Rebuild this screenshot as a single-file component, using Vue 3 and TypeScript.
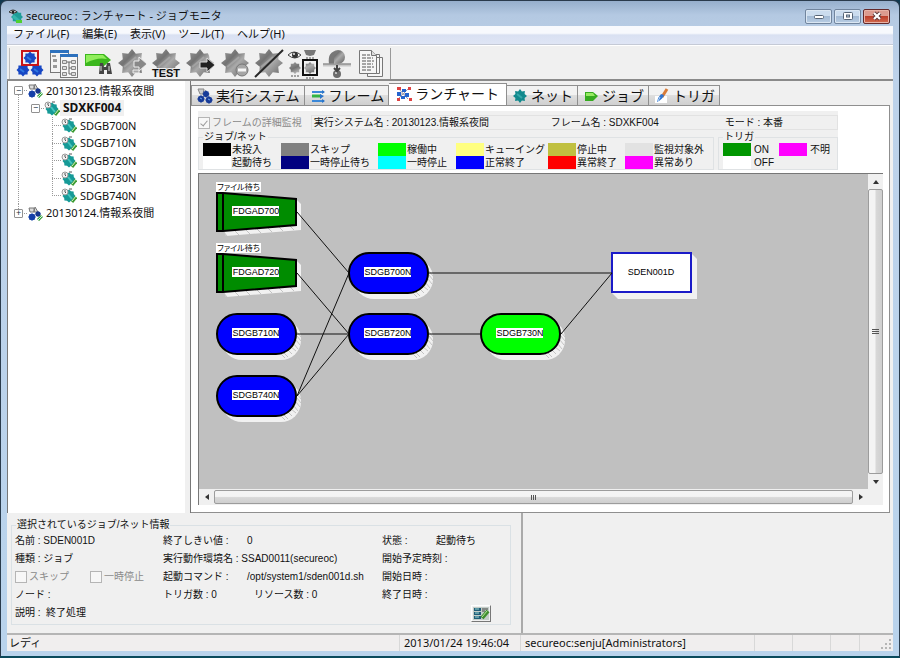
<script setup lang="ts">
import { ref } from 'vue'

interface Swatch { label: string; color: string }
interface TreeRow { label: string; level: number; mark?: string; last?: boolean }
interface JobNode { name: string; x: number; y: number; kind: 'file' | 'net' | 'job'; fill: string }

const menus = ['ファイル(F)', '編集(E)', '表示(V)', 'ツール(T)', 'ヘルプ(H)']
const tools = [
  'システム', '一覧', 'ジョブ検索', '再起動', 'テスト', '起動', '停止', '切断', '監視', '切替', 'ログ',
]

const tree: TreeRow[] = [
  { label: '20130123.情報系夜間', level: 0, mark: '−' },
  { label: 'SDXKF004', level: 1, mark: '−' },
  { label: 'SDGB700N', level: 2 },
  { label: 'SDGB710N', level: 2 },
  { label: 'SDGB720N', level: 2 },
  { label: 'SDGB730N', level: 2 },
  { label: 'SDGB740N', level: 2, last: true },
  { label: '20130124.情報系夜間', level: 0, mark: '+', last: true },
]

const tabs = ['実行システム', 'フレーム', 'ランチャート', 'ネット', 'ジョブ', 'トリガ']
const active = ref(2)

const states: Swatch[] = [
  { label: '未投入', color: '#000000' },
  { label: 'スキップ', color: '#808080' },
  { label: '稼働中', color: '#00ff00' },
  { label: 'キューイング', color: '#ffff80' },
  { label: '停止中', color: '#c0c040' },
  { label: '監視対象外', color: '#e2e2e2' },
  { label: '起動待ち', color: '#ffffff' },
  { label: '一時停止待ち', color: '#000080' },
  { label: '一時停止', color: '#00ffff' },
  { label: '正常終了', color: '#0000ff' },
  { label: '異常終了', color: '#ff0000' },
  { label: '異常あり', color: '#ff00ff' },
]
const triggers: Swatch[] = [
  { label: 'ON', color: '#009600' },
  { label: '不明', color: '#ff00ff' },
  { label: 'OFF', color: '#ffffff' },
]

const nodes: JobNode[] = [
  { name: 'FDGAD700', x: 18, y: 18, kind: 'file', fill: '#008c00' },
  { name: 'FDGAD720', x: 18, y: 79, kind: 'file', fill: '#008c00' },
  { name: 'SDGB710N', x: 18, y: 140, kind: 'net', fill: '#0000ff' },
  { name: 'SDGB740N', x: 18, y: 202, kind: 'net', fill: '#0000ff' },
  { name: 'SDGB700N', x: 150, y: 79, kind: 'net', fill: '#0000ff' },
  { name: 'SDGB720N', x: 150, y: 140, kind: 'net', fill: '#0000ff' },
  { name: 'SDGB730N', x: 282, y: 140, kind: 'net', fill: '#00ff00' },
  { name: 'SDEN001D', x: 413, y: 79, kind: 'job', fill: '#ffffff' },
]
const edges: [number, number][] = [[0, 4], [1, 5], [2, 5], [3, 4], [3, 5], [4, 7], [5, 6], [6, 7]]

/** Closed star outline used for every gear glyph. */
function gear(cx: number, cy: number, outer: number, inner: number, teeth = 8): string {
  const pts: string[] = []
  for (let i = 0; i < teeth * 2; i++) {
    const r = i % 2 ? inner : outer
    const a = (Math.PI * i) / teeth - Math.PI / 2
    pts.push(`${(cx + r * Math.cos(a)).toFixed(1)} ${(cy + r * Math.sin(a)).toFixed(1)}`)
  }
  return `M${pts.join('L')}Z`
}
</script>

<template>
  <div class="window">
    <header class="titlebar">
      <svg class="app-icon" width="14" height="14" viewBox="0 0 14 14">
        <path :d="gear(8, 8, 6, 4.5)" fill="#1f9d98" />
        <path d="M4 7l7 6" stroke="#35b5ac" stroke-width="3" />
        <path d="M0 3q4-4 8 0q-4 3-8 0z" fill="#eee" stroke="#333" /><circle cx="4" cy="3" r="1.4" fill="#222" />
        <path d="M7 11h6v3H7z" fill="#4fd02f" />
      </svg>
      <h1>secureoc : ランチャート - ジョブモニタ</h1>
      <div class="caption-buttons">
        <button type="button" aria-label="最小化">
          <svg width="12" height="10" viewBox="0 0 12 10"><rect x="1.5" y="4.5" width="9" height="3" rx="1" fill="#fff" stroke="#566475" /></svg>
        </button>
        <button type="button" aria-label="最大化">
          <svg width="12" height="10" viewBox="0 0 12 10"><rect x="1.5" y="1.5" width="9" height="7" rx="1" fill="#fff" stroke="#566475" /><rect x="4.5" y="4" width="3" height="2" fill="#b8cbe0" stroke="#566475" /></svg>
        </button>
        <button type="button" class="close" aria-label="閉じる">
          <svg width="12" height="10" viewBox="0 0 12 10"><path d="M3 2l6 6M9 2L3 8" stroke="#5b3838" stroke-width="4" /><path d="M3 2l6 6M9 2L3 8" stroke="#fff" stroke-width="2.2" /></svg>
        </button>
      </div>
    </header>

    <div class="client">
      <nav class="menubar"><button v-for="m in menus" :key="m" type="button">{{ m }}</button></nav>

      <div class="toolbar">
        <div class="tools">
          <button v-for="(t, i) in tools" :key="t" type="button" :aria-label="t">
            <svg width="32" height="30" viewBox="0 0 32 30">
              <defs>
                <linearGradient :id="`metal${i}`" x1="0" y1="0" x2="1" y2="1">
                  <stop offset="0" stop-color="#a2a2a2" /><stop offset=".35" stop-color="#727272" />
                  <stop offset=".55" stop-color="#aaa" /><stop offset="1" stop-color="#5e5e5e" />
                </linearGradient>
              </defs>
              <template v-if="i === 0">
                <path :d="gear(16, 9, 6.5, 5) + gear(9, 21, 6.5, 5) + gear(23, 21, 6.5, 5)" fill="#1747c4" />
                <path d="M13 8l4 3M6 20l4 3M20 20l4 3" stroke="#3078e0" stroke-width="2" />
                <rect x="8" y="2" width="16" height="14" fill="none" stroke="#c81418" stroke-width="2" />
              </template>
              <template v-else-if="i === 1">
                <g stroke="#777"><rect x="2.5" y="1.5" width="18" height="22" fill="#f4f4f4" /><rect x="12.5" y="5.5" width="17" height="23" fill="#f6f6f6" /></g>
                <path d="M2 1h19v3H2zM12 5h18v3H12z" fill="#2d71bd" />
                <path d="M4 6h4v2H4zM5 10h4v3H5zM5 16h4v3H5z" fill="#999" />
                <path d="M14.500 11.500h4v3h-4zM14.500 17.500h4v3h-4zM14.500 23.500h4v3h-4zM23.500 11.500h4v3h-4zM23.500 17.500h4v3h-4zM23.500 23.500h4v3h-4z" fill="#ddd" stroke="#888" />
                <path d="M21 13v12M19 13h4M21 19h2M21 25h2" stroke="#666" fill="none" />
              </template>
              <template v-else-if="i === 2">
                <path d="M3 5h19l7 6-7 6H3z" fill="#3bb71d" /><path d="M4 6h17l4 4q-10-2-21 4z" fill="#91ee5c" />
                <path d="M18 14h3l1 4h2l1-4h3l2 11h-5v-4h-3v4h-5z" fill="#454545" /><path d="M19 17v5M27 17v5" stroke="#ddd" />
              </template>
              <template v-else-if="i === 8">
                <path :d="gear(8, 19, 6, 4.5) + gear(23, 19, 6, 4.5)" :fill="`url(#metal${i})`" />
                <path d="M1 6q6-6 13 0q-6 6-13 0z" fill="#f6f6f6" stroke="#444" /><circle cx="8" cy="6" r="3" fill="#333" /><circle cx="7" cy="5" r="1" fill="#eee" />
                <path d="M17 1h12l-2 5-4 1-4-1z" fill="#777" /><path d="M19 9h8M4 27h8M19 29h8" stroke="#555" stroke-dasharray="2 1" />
                <rect x="16" y="11" width="14" height="15" fill="none" stroke="#111" stroke-width="2" />
              </template>
              <template v-else-if="i === 9">
                <circle cx="17" cy="8" r="7" :fill="`url(#metal${i})`" /><path d="M8 15q-2-13 9-13q-5 3-4 13z" fill="#777" />
                <path d="M2 16h28" stroke="#c8c8c8" stroke-width="3" /><path d="M2 15h28" stroke="#777" />
                <circle cx="16" cy="25" r="4" fill="#6b6b6b" /><circle cx="15" cy="24" r="1" fill="#ddd" /><path d="M16 16v5m-3-2l3 3 3-3" stroke="#444" stroke-width="2" fill="none" />
              </template>
              <template v-else-if="i === 10">
                <g fill="#f6f6f6" stroke="#777"><path d="M12.500 8.500h15v19h-15zM9.500 5.500h15v19h-15z" /><path d="M4.500 1.500h12l5 5v18h-17z" /><path d="M16.500 1.500v5h5" fill="#ddd" /></g>
                <path d="M7 6h8M7 9h11M7 12h12M7 15h11M7 18h12M7 21h9" stroke="#555" stroke-dasharray="4 1" />
              </template>
              <template v-else>
                <path :d="gear(16, 14, 14, 10)" :fill="`url(#metal${i})`" />
                <path d="M8 18l12-10" stroke="#c5c5c5" stroke-width="2" opacity=".4" />
                <g v-if="i === 3"><path d="M18 12h5V8l8 7-8 7v-4h-5z" fill="#888" stroke="#eee" /><path d="M17 21h6v3h-6z" fill="#aaa" stroke="#eee" /></g>
                <text v-if="i === 4" class="test" x="16" y="28">TEST</text>
                <g v-if="i === 5"><path d="M22 0h10v9h-6z" fill="#f0f0f0" /><path d="M16 13h7V9l8 7-8 7v-4h-7z" fill="#222" stroke="#ddd" /></g>
                <g v-if="i === 6"><circle cx="23" cy="21" r="6" fill="#a6a6a6" stroke="#777" /><path d="M19 21h8" stroke="#f6f6f6" stroke-width="3" /></g>
                <path v-if="i === 7" d="M2 28L30 1" stroke="#292929" stroke-width="2" />
              </template>
            </svg>
          </button>
        </div>
      </div>

      <main class="workspace">
        <aside class="tree" role="tree">
          <div v-for="(row, i) in tree" :key="row.label" class="tree-row" role="treeitem">
            <span v-if="row.level > 0" class="cell line" />
            <span v-if="row.level === 2" class="cell" />
            <span
              class="cell across"
              :class="{ line: row.level === 2 && !row.last, down: i === 0, up: row.last }"
            ><button v-if="row.mark" type="button" class="toggle" :aria-label="`${row.label} の開閉`">{{ row.mark }}</button></span>
            <svg class="tree-icon" width="16" height="15" viewBox="0 0 16 15">
              <template v-if="row.level === 0">
                <path d="M2 2h5v4H3zM8 1l3 5H7z" fill="#ddd" stroke="#777" />
                <path :d="gear(5, 11, 3.8, 3.2)" fill="#143fa8" /><path :d="gear(11, 8, 3, 2.5)" fill="#17378d" />
                <path d="M11 14l4-4" stroke="#3f9d3b" stroke-width="3" /><path d="M11 14l4-4" stroke="#cfe" />
              </template>
              <template v-else>
                <path :d="gear(8, 8, 6.5, 5.2)" fill="#169a97" /><path d="M7 6l4 5" stroke="#46c4be" stroke-width="2" />
                <circle cx="4" cy="4" r="3" fill="#f2f2f2" stroke="#999" /><path d="M4 2v2l1 1M8 1h3" stroke="#555" fill="none" />
                <path d="M11 14l4-5" stroke="#3d9b32" stroke-width="3" /><path d="M11 13l4-5" stroke="#d5f5cc" />
              </template>
            </svg>
            <span class="tree-label" :class="{ current: row.level === 1 }">{{ row.label }}</span>
          </div>
        </aside>

        <section class="detail">
          <div class="tabs" role="tablist">
            <button
              v-for="(t, i) in tabs" :key="t" type="button" role="tab"
              :class="{ active: active === i }" :aria-selected="active === i" @click="active = i"
            >
              <svg width="18" height="16" viewBox="0 0 18 16">
                <g v-if="i === 0"><path d="M2 1h6l-1 5H4zM9 2l2 4" fill="#ccc" stroke="#888" /><path :d="gear(5, 11, 3.7, 3.2) + gear(13, 12, 3.7, 3.2) + gear(10, 6, 3.5, 3)" fill="#173b98" /><path d="M4 10l2 1M12 11l2 1" stroke="#6aa3ef" /></g>
                <g v-else-if="i === 1"><path d="M3 4h12M3 13h12" stroke="#3b88d8" stroke-width="2" /><path d="M3 8h9" stroke="#33b443" stroke-width="3" /><path d="M13 2l3 2-3 2zM11 6l4 2-4 3zM13 11l3 2-3 2z" fill="#2b75c9" /></g>
                <g v-else-if="i === 2"><path d="M4 3l9 10M4 12l9-9M3 8h10" stroke="#99a" /><path d="M2 1h4v3H2zM13 1h3v3h-3zM2 12h3v3H2zM14 12h3v3h-3z" fill="#df4343" /><path d="M2 6h4v4H2zM7 3h4v3H7zM10 7h4v4h-4zM6 10h4v3H6z" fill="#2464cf" /></g>
                <g v-else-if="i === 3"><path :d="gear(9, 8, 7, 5)" fill="#12898d" /><path d="M6 6l5 4" stroke="#36a9aa" stroke-width="2" /></g>
                <g v-else-if="i === 4"><path d="M3 4h8l5 4-5 5H3z" fill="#36ab20" /><path d="M4 5h7l2 3H4z" fill="#96ea63" /></g>
                <g v-else><path d="M2 8h12v7H2z" fill="#fff" /><path d="M14 1L9 9" stroke="#d87b38" stroke-width="3" /><path d="M11 7q-1 4-7 7q1-5 4-8z" fill="#2f75d0" /><path d="M7 9l-2 4" stroke="#c5e1ff" /></g>
              </svg>
              {{ t }}
            </button>
          </div>

          <div class="tab-page">
            <div class="summary">
              <div class="headline">
                <label class="check"><input type="checkbox" checked disabled>フレームの詳細監視</label>
                <div class="facts"><span>実行システム名 : 20130123.情報系夜間</span><span>フレーム名 : SDXKF004</span><span>モード : 本番</span></div>
              </div>
              <div class="keys">
                <fieldset class="key-group states">
                  <legend>ジョブ/ネット</legend>
                  <div class="swatches"><span v-for="s in states" :key="s.label" class="swatch"><i :style="{ background: s.color }" />{{ s.label }}</span></div>
                </fieldset>
                <fieldset class="key-group triggers">
                  <legend>トリガ</legend>
                  <div class="swatches"><span v-for="s in triggers" :key="s.label" class="swatch"><i :style="{ background: s.color }" />{{ s.label }}</span></div>
                </fieldset>
              </div>
            </div>

            <div class="chart">
              <svg id="chart" class="canvas" role="img" aria-label="ランチャート">
                <g v-for="n in nodes" :key="n.name" :transform="`translate(${n.x} ${n.y})`">
                  <template v-if="n.kind === 'file'">
                    <path class="shade" d="M5 34L9 44L84 38V12L79 7V34Z" />
                    <path class="facet" d="M6 39l4 5M17 38l5 5M28 37l5 5M39 36l5 5M50 35l5 5M61 34l5 5M72 33l5 5" />
                    <path class="outline" :fill="n.fill" d="M0 1H6L79 7V33L6 39H0Z" /><path class="outline" d="M6 1V39" />
                    <rect class="tag" x="-1" y="-10" width="45" height="10" /><text class="caption" x="0" y="-2">ファイル待ち</text>
                  </template>
                  <template v-else-if="n.kind === 'net'">
                    <rect class="shade" x="5" y="5" width="79" height="41" rx="20" />
                    <path class="facet" d="M80 18l4 5M80 22l4 5M79 26l4 5M77 30l4 5M74 33l5 4M71 36l4 4M67 39l4 4M64 40l4 4" />
                    <rect class="outline" :fill="n.fill" x="0" y="0" width="79" height="40" rx="20" />
                  </template>
                  <template v-else>
                    <path class="shade" d="M0 40L6 46H85V6L80 1Z" />
                    <rect x="0" y="0" width="79" height="39" fill="#fff" stroke="#1a1ac8" stroke-width="2" />
                  </template>
                  <rect v-if="n.kind !== 'job'" class="tag" x="15" y="14" width="47" height="10" />
                  <text class="node-name" x="39" y="22">{{ n.name }}</text>
                </g>
                <g class="edges">
                  <line
                    v-for="([a, b], i) in edges" :key="i"
                    :x1="nodes[a].x + 80" :y1="nodes[a].y + 20" :x2="nodes[b].x" :y2="nodes[b].y + 20"
                  />
                </g>
              </svg>
              <div class="scroll vertical" role="scrollbar" aria-label="縦スクロール" aria-controls="chart">
                <button type="button" aria-label="上へ"><svg width="6" height="4"><path d="M0 4l3-4 3 4z" /></svg></button>
                <div class="thumb"><svg width="7" height="7"><path d="M0 1.500h7M0 3.500h7M0 5.500h7" /></svg></div>
                <button type="button" aria-label="下へ"><svg width="6" height="4"><path d="M0 0h6l-3 4z" /></svg></button>
              </div>
              <div class="scroll horizontal" role="scrollbar" aria-label="横スクロール" aria-controls="chart">
                <button type="button" aria-label="左へ"><svg width="4" height="6"><path d="M4 0v6l-4-3z" /></svg></button>
                <div class="thumb"><svg width="7" height="7"><path d="M1.500 1v5M3.500 1v5M5.500 1v5" /></svg></div>
                <button type="button" aria-label="右へ"><svg width="4" height="6"><path d="M0 0l4 3-4 3z" /></svg></button>
              </div>
              <div class="corner" />
            </div>
          </div>
        </section>
      </main>

      <section class="bottom">
        <div class="bottom-left">
          <fieldset class="info">
            <legend>選択されているジョブ/ネット情報</legend>
            <div class="info-grid">
              <span>名前 : SDEN001D</span>
              <span class="pair"><b>終了しきい値 :</b>0</span>
              <span class="state"><b>状態 :</b>起動待ち</span>
              <span>種類 : ジョブ</span>
              <span>実行動作環境名 : SSAD0011(secureoc)</span>
              <span>開始予定時刻 :</span>
              <span class="checks">
                <label class="check"><input type="checkbox" disabled>スキップ</label>
                <label class="check"><input type="checkbox" disabled>一時停止</label>
              </span>
              <span class="pair"><b>起動コマンド :</b>/opt/system1/sden001d.sh</span>
              <span>開始日時 :</span>
              <span>ノード :</span>
              <span class="counts"><b>トリガ数 : 0</b>リソース数 : 0</span>
              <span>終了日時 :</span>
              <span>説明 :&nbsp; 終了処理</span>
              <span />
              <span class="edit"><button type="button" aria-label="編集">
                <svg width="18" height="15" viewBox="0 0 18 15"><path d="M1 1h16v13H1z" fill="#c3cdc8" /><path d="M2 2h7v3H2zM2 6h7v3H2zM2 10h7v3H2z" fill="#215d77" /><path d="M3 3h4M3 7h4M3 11h4" stroke="#9edbd8" /><path d="M10 3h6M10 5h3" stroke="#444" /><path d="M10 12l6-7" stroke="#3f8d2e" stroke-width="4" /><path d="M10 11l5-6" stroke="#b5e89c" /></svg>
              </button></span>
            </div>
          </fieldset>
        </div>
        <div class="bottom-right" />
      </section>

      <footer class="status">
        <span>レディ</span><span>2013/01/24 19:46:04</span><span>secureoc:senju[Administrators]</span><span /><span /><span />
        <span class="grip"><svg width="11" height="11" viewBox="0 0 11 11"><path d="M8 0h2v2H8zM4 4h2v2H4zM8 4h2v2H8zM0 8h2v2H0zM4 8h2v2H4zM8 8h2v2H8z" fill="#b5b5b5" /></svg></span>
      </footer>
    </div>
  </div>
</template>

<style>
body { background: #10384f; }
</style>

<style scoped>
* { box-sizing: border-box; }
button { font: inherit; color: inherit; padding: 0; margin: 0; border: 0; background: none; }
b { font-weight: normal; }
svg { display: block; flex: none; }

.window {
  min-height: 100vh; display: flex; flex-direction: column; padding: 0 6px 5px;
  border: 1px solid #2a3b4c; border-bottom: 2px solid #0a4a5c; border-radius: 7px 7px 0 0;
  background: linear-gradient(#96afcc 0, #b4c9e2 14px, #bdd2ea 76px, #b9d3ec 100%);
  font: 11px/16px "Noto Sans", "Noto Sans CJK JP", sans-serif; color: #111;
}
.titlebar { height: 25px; display: flex; align-items: center; padding-top: 5px; }
.titlebar h1 { margin: 0 0 0 3px; font-size: 11px; font-weight: normal; flex: 1; white-space: nowrap; }
.app-icon { margin-left: 2px; }
.caption-buttons { display: flex; gap: 2px; padding-right: 3px; }
.caption-buttons button {
  width: 27px; height: 15px; display: grid; place-items: center; border: 1px solid #71859e; border-radius: 2px;
  background: linear-gradient(#cbdcee 45%, #a3bad4 50%, #b9cee5); box-shadow: inset 0 0 0 1px #dbe7f3;
}
.caption-buttons .close { border-color: #64292b; background: linear-gradient(#dc9b8f 45%, #bd3f2b 50%, #d26b50); box-shadow: inset 0 0 0 1px #e8b3a7; }

.client { flex: 1; display: flex; flex-direction: column; background: #f0f0f0; min-width: 0; }
.menubar { height: 19px; display: flex; gap: 13px; padding-left: 6px; background: linear-gradient(#f7f9fd 40%, #d9e1f2 50%, #dfe5f5); border-bottom: 1px solid #c5cad6; }
.menubar button { line-height: 16px; height: 16px; white-space: nowrap; }
.toolbar { height: 36px; padding: 2px 0 2px 2px; border-bottom: 2px solid #8a8a8a; border-top: 1px solid #fff; }
.tools { width: 382px; height: 31px; display: grid; grid-template-columns: repeat(11, 1fr); padding: 0 2px 0 3px; border-left: 1px solid #bbb; border-right: 1px solid #999; }
.tools button { display: grid; place-items: center; }
.test { font: bold 11px "Liberation Sans", Arial, sans-serif; text-anchor: middle; fill: #111; stroke: #eee; stroke-width: 2px; paint-order: stroke; }

.workspace { flex: 1; display: grid; grid-template-columns: 178px minmax(0, 1fr); column-gap: 5px; min-height: 0; }
.tree { background: #fff; border-left: 1px solid #777; padding: 1px 0 0 2px; }
.tree-row { display: flex; align-items: center; height: 18px; }
.tree-row:nth-child(odd) { height: 17px; }
.cell {
  width: 17px; height: 100%; display: grid; place-items: center; flex: none;
  --v: repeating-linear-gradient(#999 0 1px, transparent 1px 2px);
  --h: repeating-linear-gradient(90deg, #999 0 1px, transparent 1px 2px);
}
.line { background: var(--v) 8px 0 / 1px 100% no-repeat; }
.across { background: var(--h) 8px 50% / 9px 1px no-repeat; }
.across.line { background: var(--v) 8px 0 / 1px 100% no-repeat, var(--h) 8px 50% / 9px 1px no-repeat; }
.across.down { background: var(--v) 8px 100% / 1px 50% no-repeat, var(--h) 8px 50% / 9px 1px no-repeat; }
.across.up { background: var(--v) 8px 0 / 1px 50% no-repeat, var(--h) 8px 50% / 9px 1px no-repeat; }
.toggle { width: 9px; height: 9px; border: 1px solid #919191; border-radius: 1px; background: #fff; font-size: 9px; line-height: 6px; color: #234; }
.tree-label { padding: 0 3px; line-height: 16px; white-space: nowrap; }
.tree-label.current { font-weight: bold; font-size: 12px; background: #f0f0f0; }

.detail { display: flex; flex-direction: column; background: #f0f0f0; border-left: 1px solid #777; min-width: 0; padding: 2px 3px 0 0; }
.tabs { display: flex; align-items: flex-end; height: 22px; font-size: 14px; }
.tabs button {
  height: 20px; display: flex; align-items: center; gap: 2px; padding: 0 4px; white-space: nowrap; line-height: 18px;
  border: 1px solid #8f8f8f; border-left-width: 0; border-bottom: 0; background: linear-gradient(#f2f2f2 45%, #dedede 50%, #d0d0d0);
}
.tabs button:first-child { border-left-width: 1px; }
.tabs button.active { height: 22px; background: #fff; padding: 0 7px 2px 6px; }
.tab-page { flex: 1; display: flex; flex-direction: column; background: #fff; border: 1px solid #8f8f8f; border-left: 0; padding: 5px 6px 7px 7px; min-height: 0; }

.summary { width: 640px; max-width: 100%; background: #f0f0f0; padding-top: 3px; font: 10px/13px "Liberation Sans", "Noto Sans CJK JP", sans-serif; white-space: nowrap; }
.headline { display: flex; align-items: center; height: 17px; }
.check { display: flex; align-items: center; gap: 2px; color: #8a8a8a; }
.check input { appearance: none; display: grid; place-items: center; width: 12px; height: 12px; margin: 0; border: 1px solid #b5b5b5; background: #f7f7f7; flex: none; }
.check input:checked::before { content: ""; width: 3px; height: 6px; border: solid #999; border-width: 0 1px 1px 0; transform: rotate(40deg); }
.facts { flex: 1; display: grid; grid-template-columns: 237px 174px 1fr; margin-left: 9px; padding-left: 2px; border: 1px solid #e2e2e2; height: 15px; }
.keys { display: grid; grid-template-columns: 516px 1fr; column-gap: 4px; height: 39px; }
.key-group { margin: 0; padding: 0; border: 1px solid #dfe2e4; min-width: 0; height: 39px; }
.key-group legend { margin-left: 4px; padding: 0 1px; line-height: 12px; }
.swatches { display: grid; padding-left: 4px; }
.states .swatches { grid-template-columns: 78px 97px 78px 92px 77px 1fr; }
.triggers .swatches { grid-template-columns: 56px 1fr; }
.swatch { display: flex; gap: 1px; height: 13px; }
.swatch i { width: 28px; height: 13px; flex: none; }
.triggers .swatch { gap: 3px; }

.chart { flex: 1; display: grid; grid-template-columns: minmax(0, 1fr) 15px; grid-template-rows: minmax(0, 1fr) 16px; margin-top: 3px; border: 1px solid #777; border-width: 1px 0 0 1px; background: #c0c0c0; }
.canvas { width: 100%; height: 100%; min-height: 310px; }
.edges line { stroke: #111; }
.shade { fill: #f1f1f1; }
.facet { stroke: #c4c4c4; fill: none; }
.outline { stroke: #000; stroke-width: 2px; }
.tag { fill: #fff; }
.node-name { font: 9px "Liberation Sans", Arial, sans-serif; text-anchor: middle; fill: #000; }
.caption { font: 8px "Noto Sans CJK JP", sans-serif; font-feature-settings: "palt"; }
.scroll { display: flex; background: #f0f0f0; }
.scroll button { width: 15px; height: 15px; display: grid; place-items: center; flex: none; }
.scroll button path { fill: #333; }
.thumb { flex: 1; display: grid; place-items: center; border: 1px solid #9c9c9c; border-radius: 2px; }
.thumb path { fill: none; stroke: #555; }
.vertical { flex-direction: column; }
.vertical .thumb { background: linear-gradient(90deg, #f4f4f4 45%, #d8d8d8 55%, #cfcfcf); }
.horizontal .thumb { margin: 1px 0; background: linear-gradient(#f4f4f4 45%, #d8d8d8 55%, #cfcfcf); }
.corner { background: #f0f0f0; }

.bottom { display: grid; grid-template-columns: 516px 1fr; height: 120px; font: 10px/16px "Liberation Sans", "Noto Sans CJK JP", sans-serif; white-space: nowrap; }
.bottom-left { padding: 5px 10px 7px 4px; border-right: 2px solid #aaa; }
.info { margin: 0; padding: 0 0 0 3px; border: 1px solid #dae1e5; min-width: 0; height: 107px; }
.info legend { margin-left: 1px; padding: 0 1px; line-height: 14px; }
.info-grid { display: grid; grid-template-columns: 148px 219px 1fr; grid-auto-rows: 18px; align-items: center; }
.pair b { display: inline-block; width: 84px; }
.state b { display: inline-block; width: 54px; }
.counts b { display: inline-block; width: 91px; }
.checks { display: flex; gap: 21px; }
.edit { padding-left: 89px; }
.edit button { display: block; border: 1px solid #999; border-color: #fff #777 #777 #fff; }

.status { display: grid; grid-template-columns: 392px 121px 1fr 38px 38px 29px 34px; height: 18px; border-top: 2px solid #b5b5b5; background: #f0eeee; line-height: 16px; }
.status span { padding-left: 4px; border-left: 1px solid #d8d8d8; white-space: nowrap; }
.status span:first-child { border: 0; padding-left: 2px; }
.status .grip { display: flex; justify-content: flex-end; align-items: flex-end; padding: 0 1px 1px 0; }
</style>
